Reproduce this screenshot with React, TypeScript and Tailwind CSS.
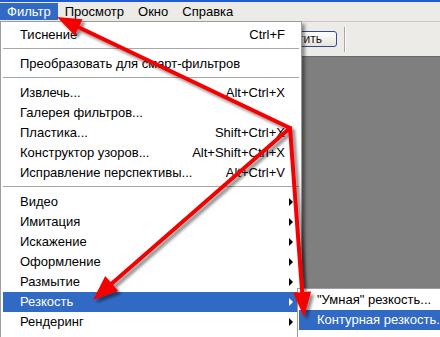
import React from "react";

type Item = { label: string; sc?: string; sub?: boolean; active?: boolean };

const groups: Item[][] = [
  [{ label: "Тиснение", sc: "Ctrl+F" }],
  [{ label: "Преобразовать для смарт-фильтров" }],
  [
    { label: "Извлечь...", sc: "Alt+Ctrl+X" },
    { label: "Галерея фильтров..." },
    { label: "Пластика...", sc: "Shift+Ctrl+X" },
    { label: "Конструктор узоров...", sc: "Alt+Shift+Ctrl+X" },
    { label: "Исправление перспективы...", sc: "Alt+Ctrl+V" },
  ],
  [
    { label: "Видео", sub: true },
    { label: "Имитация", sub: true },
    { label: "Искажение", sub: true },
    { label: "Оформление", sub: true },
    { label: "Размытие", sub: true },
    { label: "Резкость", sub: true, active: true },
    { label: "Рендеринг", sub: true },
  ],
];

const subItems = [
  { label: "\"Умная\" резкость..." },
  { label: "Контурная резкость...", active: true },
];

const menuBar = ["Фильтр", "Просмотр", "Окно", "Справка"];

// arrow from a start point to a tip, with a triangular head
function arrow(sx: number, sy: number, tx: number, ty: number, L: number, W: number) {
  const dx = tx - sx;
  const dy = ty - sy;
  const len = Math.hypot(dx, dy);
  const ux = dx / len;
  const uy = dy / len;
  const bx = tx - ux * L;
  const by = ty - uy * L;
  const nx = -uy;
  const ny = ux;
  return {
    line: [sx, sy, bx + ux * 3, by + uy * 3],
    head: `${tx},${ty} ${bx + nx * W},${by + ny * W} ${bx - nx * W},${by - ny * W}`,
  };
}

const arrows = [
  arrow(290, 128, 57, 17, 24, 9),
  arrow(290, 128, 93, 300, 25, 10),
  arrow(290, 128, 304, 317, 25, 9),
];

function SubArrow({ white }: { white?: boolean }) {
  return (
    <span
      className={`w-0 h-0 border-y-[4px] border-y-transparent border-l-[4px] ${white ? "border-l-white" : "border-l-black"}`}
    />
  );
}

export default function App() {
  return (
    <div className="relative w-[440px] h-[337px] overflow-hidden flex flex-col bg-[#ecebe7] font-['Liberation_Sans',Arial,sans-serif] text-[13px] text-black">
      {/* window title edge */}
      <div className="h-[2px] bg-[#1f5bd6]" />

      {/* menu bar */}
      <div className="h-[19px] flex items-stretch py-px">
        {menuBar.map((m, i) => (
          <div
            key={m}
            className={`flex items-center px-[7px] ${i === 0 ? "bg-[#316ac5] text-white" : ""}`}
          >
            {m}
          </div>
        ))}
      </div>
      <div className="h-px bg-[#c9c7bf]" />

      {/* options bar */}
      <div className="h-[34px] flex items-center">
        <div className="ml-[268px] w-[69px] h-[16px] flex items-center justify-end pr-[14px] rounded-[3px] border border-[#2d4c88] bg-gradient-to-b from-white to-[#e6e4dc] text-[12px] text-[#1a1a1a]">
          Очистить
        </div>
        <div className="ml-[7px] w-[2px] h-[25px] border-l border-[#a9a79e] bg-white" />
      </div>

      {/* canvas area */}
      <div className="flex-1 bg-[#7f7f7f] border-t border-[#6a6a6a]" />

      {/* Filter dropdown */}
      <div className="absolute left-0 top-[21px] w-[302px] h-[330px] bg-white border border-[#9d9d9d] pt-[3px] px-[2px] shadow-[3px_3px_3px_rgba(0,0,0,0.4)]">
        {groups.map((g, gi) => (
          <div key={gi}>
            {gi > 0 && (
              <div className="pt-[3px] pb-[5px]">
                <div className="h-px bg-[#a8a8a8]" />
              </div>
            )}
            {g.map((it) => (
              <div
                key={it.label}
                className={`h-[20px] flex items-center pl-[17px] ${it.active ? "bg-[#316ac5] text-white" : ""}`}
              >
                <span className="flex-1 whitespace-nowrap">{it.label}</span>
                {it.sc && <span className="whitespace-nowrap">{it.sc}</span>}
                <span className="w-[14px] flex items-center pl-[4px]">
                  {it.sub && <SubArrow white={it.active} />}
                </span>
              </div>
            ))}
          </div>
        ))}
      </div>

      {/* Sharpen submenu */}
      <div className="absolute left-[297px] top-[288px] w-[170px] h-[60px] bg-white border border-[#9d9d9d] p-px shadow-[2px_2px_3px_rgba(0,0,0,0.35)]">
        {subItems.map((s) => (
          <div
            key={s.label}
            className={`h-[20px] flex items-center pl-[18px] whitespace-nowrap ${s.active ? "bg-[#316ac5] text-white" : ""}`}
          >
            {s.label}
          </div>
        ))}
      </div>

      {/* red annotation arrows */}
      <svg className="absolute inset-0 pointer-events-none" width="440" height="337" viewBox="0 0 440 337">
        <defs>
          <filter id="sh" x="-20%" y="-20%" width="140%" height="140%">
            <feDropShadow dx="3" dy="3" stdDeviation="1.6" floodColor="#000" floodOpacity="0.45" />
          </filter>
        </defs>
        <g filter="url(#sh)">
          {arrows.map((a, i) => (
            <g key={i}>
              <line
                x1={a.line[0]}
                y1={a.line[1]}
                x2={a.line[2]}
                y2={a.line[3]}
                stroke="#f50000"
                strokeWidth="4"
                strokeLinecap="round"
              />
              <polygon points={a.head} fill="#f50000" />
            </g>
          ))}
        </g>
      </svg>
    </div>
  );
}
